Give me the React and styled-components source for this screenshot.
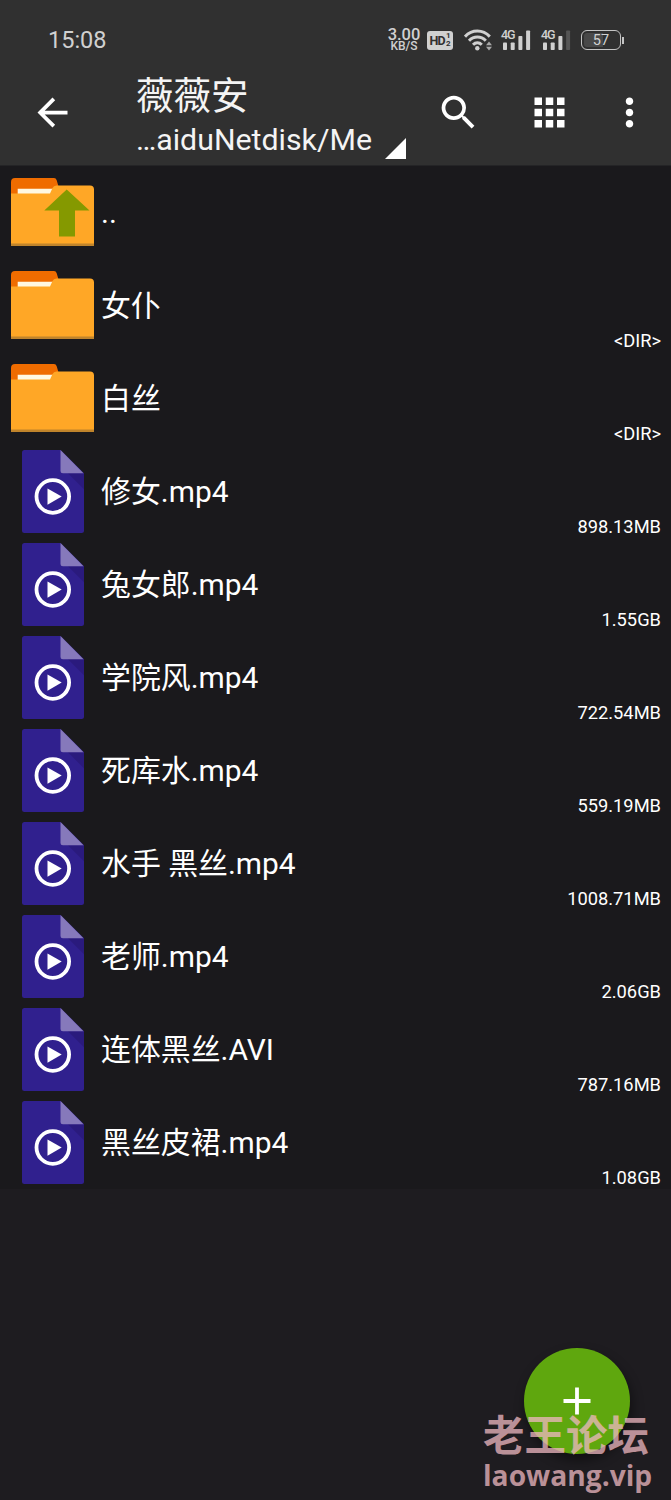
import styled, { createGlobalStyle } from 'styled-components';

const entries = [
	{ name: '..', type: 'up' },
	{ name: '女仆', type: 'dir', size: '<DIR>' },
	{ name: '白丝', type: 'dir', size: '<DIR>' },
	{ name: '修女.mp4', type: 'video', size: '898.13MB' },
	{ name: '兔女郎.mp4', type: 'video', size: '1.55GB' },
	{ name: '学院风.mp4', type: 'video', size: '722.54MB' },
	{ name: '死库水.mp4', type: 'video', size: '559.19MB' },
	{ name: '水手 黑丝.mp4', type: 'video', size: '1008.71MB' },
	{ name: '老师.mp4', type: 'video', size: '2.06GB' },
	{ name: '连体黑丝.AVI', type: 'video', size: '787.16MB' },
	{ name: '黑丝皮裙.mp4', type: 'video', size: '1.08GB' },
];

export default function App() {
	return (
		<>
			<GlobalStyle />
			<Screen>
				<Header>
					<StatusBar>
						<Clock>15:08</Clock>
						<StatusIcons>
							<Speed>
								<b>3.00</b>
								<span>KB/S</span>
							</Speed>
							<HdBadge>
								HD
								<small>
									<i>1</i>
									<i>2</i>
								</small>
							</HdBadge>
							<WifiIcon />
							<Signal bars={4} />
							<Signal bars={3} />
							<Battery>
								<BatteryBody>57</BatteryBody>
								<BatteryTip />
							</Battery>
						</StatusIcons>
					</StatusBar>
					<Toolbar>
						<IconButton aria-label="Back">
							<svg viewBox="0 0 24 24">
								<path d="M20 11H7.83l5.59-5.59L12 4l-8 8 8 8 1.41-1.41L7.83 13H20v-2z" />
							</svg>
						</IconButton>
						<PathPicker>
							<Title>薇薇安</Title>
							<PathLine>
								<Path>…aiduNetdisk/Me</Path>
								<Corner viewBox="0 0 21 21">
									<path d="M21 0v21H0z" />
								</Corner>
							</PathLine>
						</PathPicker>
						<Actions>
							<IconButton aria-label="Search">
								<svg viewBox="0 0 24 24">
									<path d="M15.5 14h-.79l-.28-.27A6.471 6.471 0 0 0 16 9.5 6.5 6.5 0 1 0 9.5 16c1.61 0 3.09-.59 4.23-1.57l.27.28v.79l5 4.99L20.49 19l-4.99-5zm-6 0C7.01 14 5 11.99 5 9.5S7.01 5 9.5 5 14 7.01 14 9.5 11.99 14 9.5 14z" />
								</svg>
							</IconButton>
							<IconButton aria-label="View">
								<svg viewBox="0 0 24 24">
									<path d="M4 8h4V4H4v4zm6 12h4v-4h-4v4zm-6 0h4v-4H4v4zm0-6h4v-4H4v4zm6 0h4v-4h-4v4zm6-10v4h4V4h-4zm-6 4h4V4h-4v4zm6 6h4v-4h-4v4zm0 6h4v-4h-4v4z" />
								</svg>
							</IconButton>
							<IconButton aria-label="More">
								<svg viewBox="0 0 24 24">
									<path d="M12 8c1.1 0 2-.9 2-2s-.9-2-2-2-2 .9-2 2 .9 2 2 2zm0 2c-1.1 0-2 .9-2 2s.9 2 2 2 2-.9 2-2-.9-2-2-2zm0 6c-1.1 0-2 .9-2 2s.9 2 2 2 2-.9 2-2-.9-2-2-2z" />
								</svg>
							</IconButton>
						</Actions>
					</Toolbar>
				</Header>
				<List>
					{entries.map((entry) => (
						<Row key={entry.name}>
							<IconCell>
								{entry.type === 'video' ? (
									<VideoIcon />
								) : (
									<FolderIcon up={entry.type === 'up'} />
								)}
							</IconCell>
							<Name>{entry.name}</Name>
							<Size>{entry.size}</Size>
						</Row>
					))}
				</List>
				<Fab aria-label="Add">
					<svg viewBox="0 0 28 28">
						<path d="M14 0.5v27M0.5 14h27" />
					</svg>
				</Fab>
				<Watermark>
					<strong>老王论坛</strong>
					<span>laowang.vip</span>
				</Watermark>
			</Screen>
		</>
	);
}

function WifiIcon() {
	return (
		<Wifi viewBox="0 0 28 22">
			<g fill="none" stroke="#d0d0d0" strokeWidth="3">
				<path d="M1 7.600C8 0.200 18.800 0.200 25.800 7.600" />
				<path d="M5 11.800C9.800 6.800 17 6.800 21.800 11.800" />
				<path d="M9 15.800C11.600 13.200 15.200 13.200 17.800 15.800" />
			</g>
			<circle cx="13.300" cy="19.200" r="2.200" fill="#d0d0d0" />
			<path d="M22 16.200l3-3.600 3 3.600zM22 17.800l3 3.600 3-3.600z" fill="#a8a8a8" />
		</Wifi>
	);
}

function Signal({ bars }) {
	return (
		<SignalBox>
			<em>4G</em>
			<svg viewBox="0 0 28 20">
				{[12.5, 12.5, 6, 0.5].map((top, i) => (
					<rect
						key={i}
						x={i * 7.7}
						y={top}
						width="4"
						height={20 - top}
						rx="0.8"
						fill={i < bars ? '#d0d0d0' : '#555'}
					/>
				))}
			</svg>
		</SignalBox>
	);
}

function FolderIcon({ up }) {
	return (
		<Folder viewBox="0 0 83 68">
			<path d="M0 20V4q0-4 4-4h39q2 0 2.600 2L48 10v10z" fill="#ef6c00" />
			<path d="M6.700 10.700H44V20H6.700z" fill="#fff8e1" />
			<path d="M0 15.500h39l2.500-5.500q1-2.500 4-2.500H79q4 0 4 4V68H0z" fill="#ffa726" />
			<path d="M0 65.500h83v2.500H0z" fill="#c0842b" />
			{up && <path d="M55.700 11.500L78.500 32.500H64V58.500H48V32.500H33.300z" fill="#859900" />}
		</Folder>
	);
}

function VideoIcon() {
	return (
		<Video viewBox="0 0 62 83">
			<path d="M2.500 0H38.500L62 23.300V80.500q0 2.500-2.500 2.500H2.500Q0 83 0 80.500V2.500Q0 0 2.500 0z" fill="#30208e" />
			<path d="M46 23.300H62V39.300z" fill="#2a1a7d" />
			<path d="M38.500 0L61.500 23.300H41q-2.500 0-2.500-2.500z" fill="#8679bb" />
			<circle cx="30.800" cy="46.500" r="16.300" fill="none" stroke="#fff" strokeWidth="3.800" />
			<path d="M25.500 38.500L39.700 46.500L25.500 54.700z" fill="#fff" />
		</Video>
	);
}

const GlobalStyle = createGlobalStyle`
	* {
		box-sizing: border-box;
	}
	body {
		margin: 0;
		background: #1e1c20;
		font-family: Roboto, 'Noto Sans CJK SC', sans-serif;
		color: #fff;
	}
`;

const Screen = styled.div`
	position: relative;
	width: 671px;
	height: 1500px;
	overflow: hidden;
`;

const Header = styled.header`
	height: 166px;
	background: #303030;
	border-bottom: 1px solid #242426;
`;

const StatusBar = styled.div`
	display: flex;
	align-items: center;
	justify-content: space-between;
	height: 68px;
	padding: 12px 47px 0 48px;
	color: #d0d0d0;
`;

const Clock = styled.span`
	font-size: 23.5px;
	line-height: 28px;
`;

const StatusIcons = styled.div`
	display: flex;
	align-items: center;
`;

const Speed = styled.div`
	display: flex;
	flex-direction: column;
	align-items: center;
	width: 32px;
	margin-right: 7px;
	b {
		font-size: 16.5px;
		font-weight: 500;
		line-height: 13px;
	}
	span {
		font-size: 12px;
		font-weight: 500;
		line-height: 11px;
	}
`;

const HdBadge = styled.div`
	display: flex;
	align-items: center;
	justify-content: center;
	width: 26px;
	height: 19px;
	margin-right: 11px;
	border-radius: 3px;
	background: #d0d0d0;
	color: #303030;
	font-size: 12.5px;
	font-weight: 700;
	letter-spacing: -0.8px;
	small {
		display: flex;
		flex-direction: column;
		margin-left: 1px;
		font-size: 8px;
		letter-spacing: 0;
	}
	i {
		font-style: normal;
		line-height: 8px;
	}
`;

const Wifi = styled.svg`
	width: 28px;
	height: 22px;
	margin-right: 9px;
`;

const SignalBox = styled.div`
	display: grid;
	width: 30px;
	height: 20px;
	margin-right: 10px;
	svg,
	em {
		grid-area: 1 / 1;
	}
	svg {
		display: block;
		width: 28px;
		height: 20px;
		margin-left: 2px;
	}
	em {
		margin-top: -1px;
		font-size: 12.5px;
		font-style: normal;
		font-weight: 500;
		line-height: 12px;
		letter-spacing: -1px;
	}
`;

const Battery = styled.div`
	display: flex;
	align-items: center;
`;

const BatteryBody = styled.div`
	display: flex;
	align-items: center;
	justify-content: center;
	width: 40px;
	height: 20px;
	border: 1.5px solid #c4c4c4;
	border-radius: 6px;
	background: linear-gradient(90deg, #484848 55%, #303030 55%);
	box-shadow: inset 0 0 0 2px #303030;
	font-size: 14.5px;
`;

const BatteryTip = styled.div`
	width: 2px;
	height: 7px;
	margin-left: 1px;
	background: #c4c4c4;
`;

const Toolbar = styled.div`
	display: flex;
	align-items: center;
	height: 89px;
	padding: 0 19px 0 30px;
`;

const IconButton = styled.button`
	display: block;
	width: 45px;
	height: 45px;
	padding: 0;
	border: 0;
	background: none;
	svg {
		display: block;
		width: 100%;
		height: 100%;
		fill: #fff;
	}
`;

const PathPicker = styled.div`
	margin-left: 61px;
`;

const Title = styled.div`
	margin-top: 8px;
	font-size: 37.5px;
	line-height: 44px;
	color: #f4f4f4;
`;

const PathLine = styled.div`
	display: flex;
	align-items: flex-end;
	height: 42px;
	padding-bottom: 1px;
`;

const Path = styled.span`
	width: 249px;
	font-size: 30.3px;
	line-height: 38px;
	color: #f4f4f4;
	white-space: nowrap;
`;

const Corner = styled.svg`
	width: 21px;
	height: 21px;
	fill: #fff;
`;

const Actions = styled.div`
	display: flex;
	margin-left: auto;
	button + button {
		margin-left: 46px;
	}
	button:last-child {
		margin-left: 35px;
	}
`;

const List = styled.div`
	background: #1a191c;
`;

const Row = styled.div`
	display: flex;
	height: 93px;
	padding: 0 10px 0 11px;
`;

const IconCell = styled.div`
	width: 90px;
`;

const Folder = styled.svg`
	display: block;
	width: 83px;
	height: 68px;
	margin-top: 12px;
`;

const Video = styled.svg`
	display: block;
	width: 62px;
	height: 83px;
	margin: 5px 0 0 11px;
`;

const Name = styled.div`
	flex: 1;
	font-size: 29.9px;
	line-height: 94px;
	white-space: nowrap;
`;

const Size = styled.div`
	align-self: flex-end;
	font-size: 18.3px;
	line-height: 23px;
`;

const Fab = styled.button`
	position: absolute;
	right: 41px;
	bottom: 46px;
	display: flex;
	align-items: center;
	justify-content: center;
	width: 106px;
	height: 106px;
	padding: 0;
	border: 0;
	border-radius: 50%;
	background: #5fa70e;
	box-shadow: 2px 6px 12px rgba(0, 0, 0, 0.45);
	svg {
		width: 28px;
		height: 28px;
		stroke: #fff;
		stroke-width: 3.8;
	}
`;

const Watermark = styled.div`
	position: absolute;
	left: 483px;
	bottom: 7px;
	display: flex;
	flex-direction: column;
	color: rgba(239, 184, 193, 0.75);
	white-space: nowrap;
	strong {
		font-family: 'Noto Sans CJK SC', sans-serif;
		font-size: 41.5px;
		font-weight: 700;
		line-height: 44px;
	}
	span {
		margin-top: 2px;
		font-family: 'Open Sans', sans-serif;
		font-size: 28.2px;
		font-weight: 700;
		line-height: 36px;
	}
`;
